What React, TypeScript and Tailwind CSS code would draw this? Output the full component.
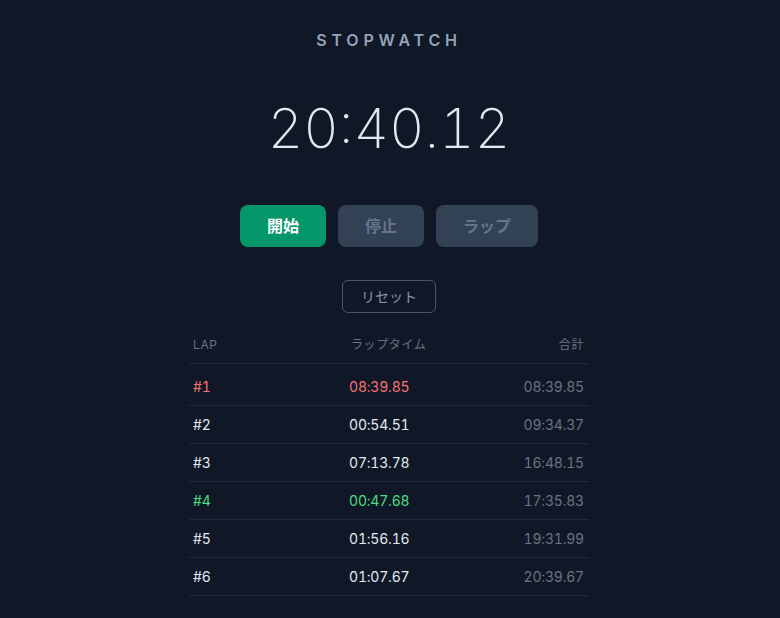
import React from "react";

const laps = [
  { n: 1, lap: "08:39.85", total: "08:39.85", tone: "slow" },
  { n: 2, lap: "00:54.51", total: "09:34.37", tone: "" },
  { n: 3, lap: "07:13.78", total: "16:48.15", tone: "" },
  { n: 4, lap: "00:47.68", total: "17:35.83", tone: "fast" },
  { n: 5, lap: "01:56.16", total: "19:31.99", tone: "" },
  { n: 6, lap: "01:07.67", total: "20:39.67", tone: "" },
];

function App() {
  return (
    <div className="min-h-[618px] w-full bg-[#101828] flex flex-col items-center pt-7 pr-[2px] font-['Inter','Noto_Sans_CJK_JP',sans-serif]">
      <h1 className="text-base leading-6 font-semibold tracking-[0.3em] text-[#94a3b8]">STOPWATCH</h1>

      <div className="mt-[49px] text-[55px] leading-none font-extralight text-[#e2e8f0] tabular-nums">20:40.12</div>

      <div className="mt-[49px] flex gap-3">
        <button className="h-[42px] px-[27px] rounded-lg bg-[#059669] text-white text-base font-semibold">開始</button>
        <button className="h-[42px] px-[27px] rounded-lg bg-[#334155] text-[#64748b] text-base font-semibold">停止</button>
        <button className="h-[42px] px-[27px] rounded-lg bg-[#334155] text-[#64748b] text-base font-semibold">ラップ</button>
      </div>

      <button className="mt-[33px] h-[33px] w-[94px] rounded-md border border-[#475569] text-sm text-[#8b95a5]">リセット</button>

      <div className="mt-6 w-[400px]">
        <div className="grid grid-cols-[158px_1fr_auto] px-1 pb-[10px] border-b border-[#1e293b] text-xs leading-4 tracking-wider text-[#6b7280]">
          <span>LAP</span>
          <span>ラップタイム</span>
          <span className="text-right pr-px">合計</span>
        </div>
        <div className="h-1" />
        {laps.map((l) => {
          const c = l.tone === "slow" ? "text-[#f87171]" : l.tone === "fast" ? "text-[#4ade80]" : "text-[#e2e8f0]";
          return (
            <div key={l.n} className="grid grid-cols-[156px_1fr_auto] items-center h-[38px] px-1 border-b border-[#1e293b] text-sm tabular-nums tracking-[-0.2px]">
              <span className={c}>#{l.n}</span>
              <span className={c}>{l.lap}</span>
              <span className="text-right text-[#6b7280] pr-px">{l.total}</span>
            </div>
          );
        })}
      </div>
    </div>
  );
}

export default App;
